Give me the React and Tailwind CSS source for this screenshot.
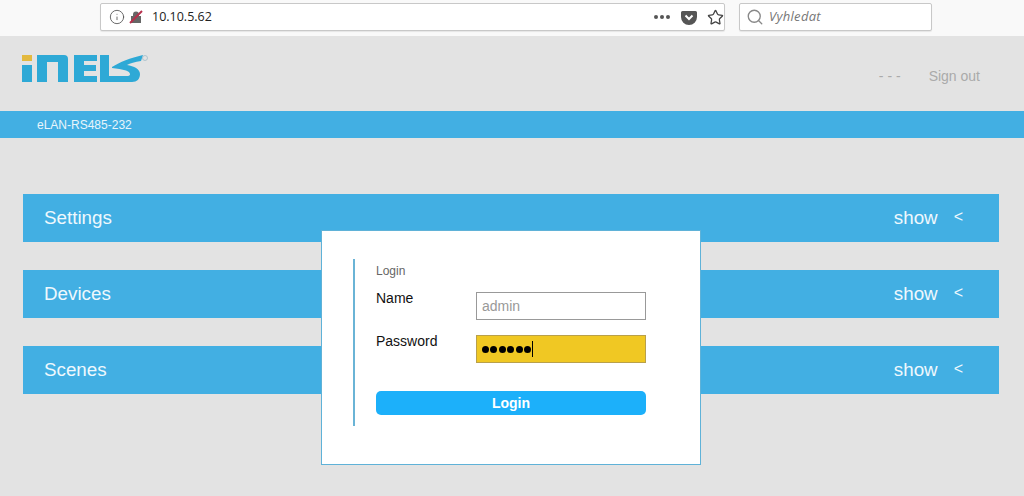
import React from "react";
import { Search, Info, Star } from "lucide-react";

const sans = "font-['Liberation_Sans',Arial,sans-serif]";

function Logo() {
  return (
    <svg width="128" height="28" viewBox="0 0 128 28" className="block">
      <rect x="0" y="0" width="10" height="6" fill="#e3b93f" />
      <rect x="0" y="10" width="10" height="17" fill="#2ea9d6" />
      <path d="M15 0h27a4 4 0 0 1 4 4v23H36V7H25v20H15z" fill="#2ea9d6" />
      <path d="M52 0h23v6H62v4h12v6H62v5h13v6H52z" fill="#2ea9d6" />
      <path d="M90 12C98 7 108 3 121 0L119 6C113 7 108 8 105 10C112 11 118 14 118 19C118 24 115 27 110 27H78V0H87V21H106C109 21 109 17 104 15.5C100 14.5 95 13.5 90 13Z" fill="#2ea9d6" />
      <circle cx="123" cy="3" r="2.5" fill="none" stroke="#9ab8c6" strokeWidth="0.7" />
    </svg>
  );
}

function Section({ title }) {
  return (
    <div className="h-[48px] bg-[#42afe3] flex items-center pl-[21px] pr-[36px] text-[#eef8fd] text-[18.8px]">
      <span className="flex-1">{title}</span>
      <span className="mr-[16px]">show</span>
      <span className="text-[16px] leading-none -mt-[3px]">&lt;</span>
    </div>
  );
}

export default function App() {
  return (
    <div className={`relative w-[1024px] h-[496px] overflow-hidden bg-[#e3e3e3] ${sans}`}>
      <div className="h-[36px] bg-[#f9f9f9] flex items-start pt-[3px] pl-[100px]">
        <div className="w-[625px] h-[28px] bg-white border border-[#c8c8c8] rounded-[2px] flex items-center pl-[8px] pr-0 shadow-[0_1px_1px_rgba(0,0,0,0.08)]">
          <Info size={16} strokeWidth={1.3} className="text-[#555]" />
          <svg width="14" height="14" viewBox="0 0 14 14" className="ml-[4px]">
            <path d="M4 6V4.5a3 3 0 0 1 6 0V6h2v7H2V6z" fill="#666" />
            <path d="M1 13L13 1" stroke="#b6304c" strokeWidth="2" />
          </svg>
          <span className="ml-[9px] text-[12.5px] text-[#222] font-['Open_Sans',sans-serif]">10.10.5.62</span>
          <span className="flex-1" />
          <span className="flex gap-[2px] mr-[11px]">
            <i className="w-[4px] h-[4px] rounded-full bg-[#555]" />
            <i className="w-[4px] h-[4px] rounded-full bg-[#555]" />
            <i className="w-[4px] h-[4px] rounded-full bg-[#555]" />
          </span>
          <svg width="16" height="15" viewBox="0 0 16 15" className="mr-[10px]">
            <path d="M1.5 1h13A1.5 1.5 0 0 1 16 2.5V7a8 8 0 0 1-16 0V2.5A1.5 1.5 0 0 1 1.5 1z" fill="#555" />
            <path d="M4.5 5.5L8 9l3.5-3.5" stroke="#fff" strokeWidth="2" fill="none" />
          </svg>
          <Star size={17} strokeWidth={1.8} className="text-[#444]" />
        </div>
        <div className="ml-[14px] w-[193px] h-[28px] bg-white border border-[#c8c8c8] rounded-[2px] flex items-center pl-[6px] shadow-[0_1px_1px_rgba(0,0,0,0.08)]">
          <Search size={18} strokeWidth={1.8} className="text-[#888]" />
          <span className="ml-[5px] text-[13px] italic text-[#777] font-['Open_Sans',sans-serif] tracking-[0.3px]">Vyhledat</span>
        </div>
      </div>

      <div className="h-[75px] flex relative">
        <div className="pl-[22px] pt-[19px]"><Logo /></div>
        <div className="flex-1" />
        <div className="flex items-start pt-[30px] text-[14px] text-[#aaa] pr-[44px]">
          <span className="mr-[28px]">- - -</span>
          <span>Sign out</span>
        </div>
      </div>

      <div className="h-[27px] bg-[#42afe3] pl-[37px] text-[12px] text-[#e8f5fb] flex items-center">eLAN-RS485-232</div>

      <div className="pt-[56px] pl-[23px] pr-[25px] flex flex-col gap-[28px]">
        <Section title="Settings" />
        <Section title="Devices" />
        <Section title="Scenes" />
      </div>

      <div className="absolute left-[321px] top-[230px] w-[380px] h-[235px] bg-white border border-[#5fb2d8] pl-[31px] pt-[28px]">
        <div className="w-[318px] h-[167px] border-l-2 border-[#6ab4d6] pl-[21px]">
          <div className="text-[12px] text-[#666] leading-[14px] pt-[5px]">Login</div>
          <div className="flex mt-[11px]">
            <div className="w-[100px] text-[14px] text-[#111] leading-[16px] pt-[1px]">Name</div>
            <div className="w-[170px] h-[28px] mt-[3px] border border-[#999] bg-white text-[14px] text-[#999] flex items-center pl-[5px]">admin</div>
          </div>
          <div className="flex mt-[15px]">
            <div className="w-[100px] text-[14px] text-[#111] leading-[16px] -mt-[2px]">Password</div>
            <div className="w-[170px] h-[28px] border border-[#b9a04a] bg-[#f0c823] flex items-center pl-[5px] gap-[1.4px]">
              {[0, 1, 2, 3, 4, 5].map((i) => (
                <i key={i} className="w-[7px] h-[7px] rounded-full bg-black" />
              ))}
              <i className="w-px h-[16px] bg-black" />
            </div>
          </div>
          <div className="mt-[28px] w-[270px] h-[24px] rounded-[5px] bg-[#1cb0fa] text-white font-bold text-[14px] flex items-center justify-center">Login</div>
        </div>
      </div>
    </div>
  );
}
